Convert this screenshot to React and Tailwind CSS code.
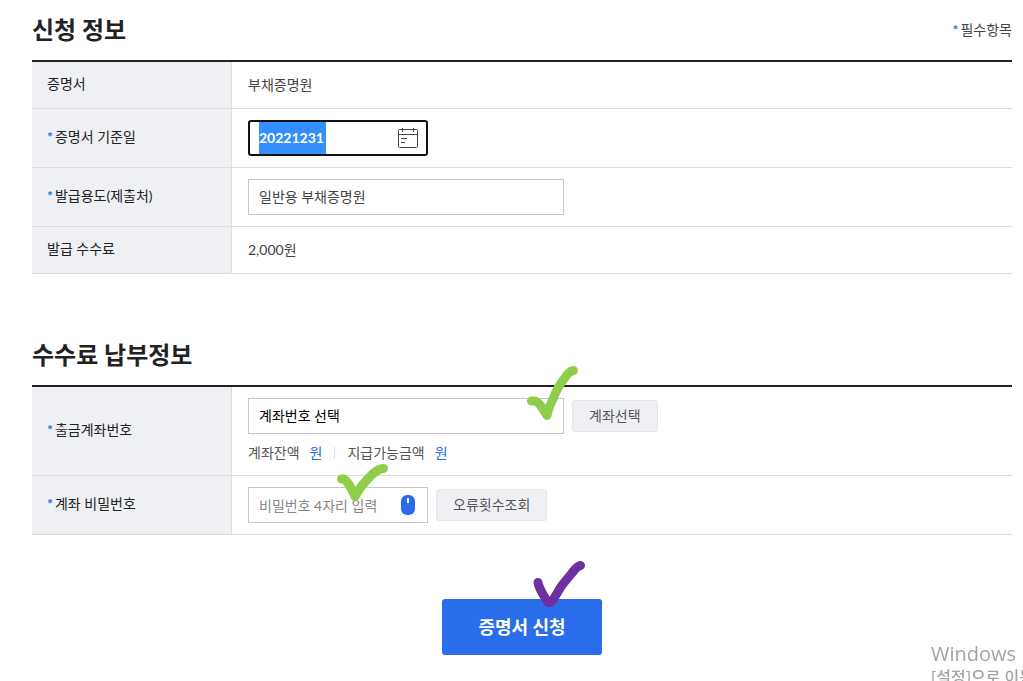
// pages/CertificateRequest.jsx
import React, { useEffect, useRef, useState } from "react";

const fieldClass =
  "block h-9 appearance-none rounded-none border border-[#c6c6c6] bg-white px-[10px] text-sm";

const subButtonClass =
  "h-8 cursor-pointer rounded-[3px] border border-[#e4e5ea] bg-[#eff0f4] px-4 text-sm text-[#555]";

const Required = () => (
  <span className="mr-0.5 font-bold text-[#2a6dea]">*</span>
);

const SectionTitle = ({ children }) => (
  <h2 className="text-2xl leading-9 font-bold text-[#222]">{children}</h2>
);

const FormTable = ({ label, children }) => (
  <table
    aria-label={label}
    className="w-full table-fixed border-separate border-spacing-0 border-t-2 border-[#222]"
  >
    <colgroup>
      <col className="w-[200px]" />
      <col />
    </colgroup>
    <tbody>{children}</tbody>
  </table>
);

const FormRow = ({ label, htmlFor, required, children }) => (
  <tr>
    <th
      scope="row"
      className="border-r border-b border-[#dcdcdf] bg-[#eff0f4] px-[15px] pt-[10px] pb-3 text-left text-sm leading-6 font-normal text-[#222]"
    >
      {required && <Required />}
      {htmlFor ? <label htmlFor={htmlFor}>{label}</label> : label}
    </th>
    <td className="border-b border-[#dcdcdf] px-4 py-[11px] text-sm leading-6 text-[#444]">
      {children}
    </td>
  </tr>
);

const CalendarIcon = () => (
  <svg width="20" height="20" viewBox="0 0 20 20" fill="none" stroke="#444">
    <rect x="0.5" y="1.5" width="19" height="18" rx="1" />
    <path d="M0.5 6.5h19M4.5 0v4M15.5 0v4M3 10.5h6M3 14.5h4" />
  </svg>
);

const MouseIcon = () => (
  <svg width="14" height="20" viewBox="0 0 14 20">
    <rect width="14" height="20" rx="6" fill="#2a6dea" />
    <rect x="6" y="3" width="2" height="5" fill="#fff" />
  </svg>
);

// Hand-drawn check laid over a field or button
const Check = ({ d, color, className }) => (
  <svg
    width="70"
    height="70"
    viewBox="0 0 70 70"
    fill="none"
    stroke={color}
    strokeWidth="9"
    strokeLinecap="round"
    strokeLinejoin="round"
    aria-hidden="true"
    className={`pointer-events-none absolute ${className}`}
  >
    <path d={d} />
  </svg>
);

const App = () => {
  const [date, setDate] = useState("20221231");
  const [dateSelected, setDateSelected] = useState(true);
  const [password, setPassword] = useState("");
  const dateRef = useRef(null);

  useEffect(() => {
    dateRef.current.focus();
    dateRef.current.select();
  }, []);

  const handleSelect = (e) => {
    const { selectionStart, selectionEnd, value } = e.target;
    setDateSelected(selectionStart === 0 && selectionEnd === value.length);
  };

  return (
    <div className="bg-white pr-[11px] pb-6 pl-8 font-[Lato,'Noto_Sans_CJK_KR',sans-serif]">
      {/* Request info */}
      <section className="pt-3">
        <div className="mb-3 flex items-center justify-between">
          <SectionTitle>신청 정보</SectionTitle>
          <p className="text-sm text-[#444]">
            <Required />
            필수항목
          </p>
        </div>
        <FormTable label="신청 정보">
          <FormRow label="증명서">부채증명원</FormRow>
          <FormRow label="증명서 기준일" htmlFor="baseDate" required>
            <div className="relative w-[180px]">
              <input
                id="baseDate"
                ref={dateRef}
                type="text"
                value={date}
                onChange={(e) => setDate(e.target.value)}
                onSelect={handleSelect}
                onBlur={() => setDateSelected(false)}
                className={`block h-9 w-full rounded-[3px] border-2 border-[#111] bg-white bg-size-[67px_32px] bg-position-[9px_0] bg-no-repeat px-[9px] pb-0.5 text-sm font-bold text-[#444] outline-none selection:bg-[#338fff] selection:text-white ${
                  dateSelected ? "bg-[linear-gradient(#338fff,#338fff)]" : ""
                }`}
              />
              <button
                type="button"
                aria-label="달력"
                className="absolute top-2 right-[10px] cursor-pointer"
              >
                <CalendarIcon />
              </button>
            </div>
          </FormRow>
          <FormRow label="발급용도(제출처)" htmlFor="purpose" required>
            <select id="purpose" className={`${fieldClass} w-[316px] text-[#444]`}>
              <option>일반용 부채증명원</option>
            </select>
          </FormRow>
          <FormRow label="발급 수수료">2,000원</FormRow>
        </FormTable>
      </section>

      {/* Fee payment info */}
      <section className="pt-[63px]">
        <div className="mb-3">
          <SectionTitle>수수료 납부정보</SectionTitle>
        </div>
        <FormTable label="수수료 납부정보">
          <FormRow label="출금계좌번호" htmlFor="account" required>
            <div className="flex items-center gap-2">
              <div className="relative w-[316px]">
                <select id="account" className={`${fieldClass} w-full text-black`}>
                  <option>계좌번호 선택</option>
                </select>
                <Check
                  color="#8fce4a"
                  d="M16.5 41H20C24 42 28 49 32 55.500C33 50 35 45 38 39C41 31 45 24 49 19C52 14 55 11 58.500 10.500"
                  className="-top-[38px] -right-[21px]"
                />
              </div>
              <button type="button" className={subButtonClass}>
                계좌선택
              </button>
            </div>
            <div className="mt-2 flex items-center leading-[22px] text-[#555]">
              <span>계좌잔액</span>
              <span className="ml-[10px] text-[#2a6dea]">원</span>
              <span className="mx-3 h-3 w-px bg-[#dcdcdf]" />
              <span>지급가능금액</span>
              <span className="ml-[10px] text-[#2a6dea]">원</span>
            </div>
          </FormRow>
          <FormRow label="계좌 비밀번호" htmlFor="password" required>
            <div className="flex items-center gap-2">
              <div className="relative w-[180px]">
                <input
                  id="password"
                  type="password"
                  maxLength={4}
                  placeholder="비밀번호 4자리 입력"
                  value={password}
                  onChange={(e) => setPassword(e.target.value)}
                  className={`${fieldClass} w-full text-[#444] placeholder:text-[#888]`}
                />
                <button
                  type="button"
                  aria-label="마우스 입력"
                  className="absolute top-2 right-[13px] cursor-pointer"
                >
                  <MouseIcon />
                </button>
                <Check
                  color="#8fce4a"
                  d="M11.5 24H14C17 26 22 34 25 41.500C28 36 32 30 36 26C42 19 47 14 53.500 13.500"
                  className="-top-8 left-[82px]"
                />
              </div>
              <button type="button" className={subButtonClass}>
                오류횟수조회
              </button>
            </div>
          </FormRow>
        </FormTable>
      </section>

      <div className="mt-16 flex justify-center">
        <div className="relative">
          <button
            type="button"
            className="h-14 w-40 cursor-pointer rounded-[3px] bg-[#2a6dea] text-lg font-bold text-white"
          >
            증명서 신청
          </button>
          <Check
            color="#7030a0"
            d="M8 22.500C9 29 14 36 18 42.500H21C26 36 29 29 33 24L42 13C45 9 48 6 50.500 5.500"
            className="-top-[39px] left-[88px]"
          />
        </div>
      </div>

      {/* Windows activation notice */}
      <div className="pointer-events-none fixed right-0 bottom-0 h-10 w-[92px] overflow-hidden font-['Open_Sans','Noto_Sans_CJK_KR',sans-serif] font-medium whitespace-nowrap text-[#a3a3a3]">
        <p className="text-xl leading-[26px]">Windows</p>
        <p className="text-base leading-5">[설정]으로 이동</p>
      </div>
    </div>
  );
};

export default App;
